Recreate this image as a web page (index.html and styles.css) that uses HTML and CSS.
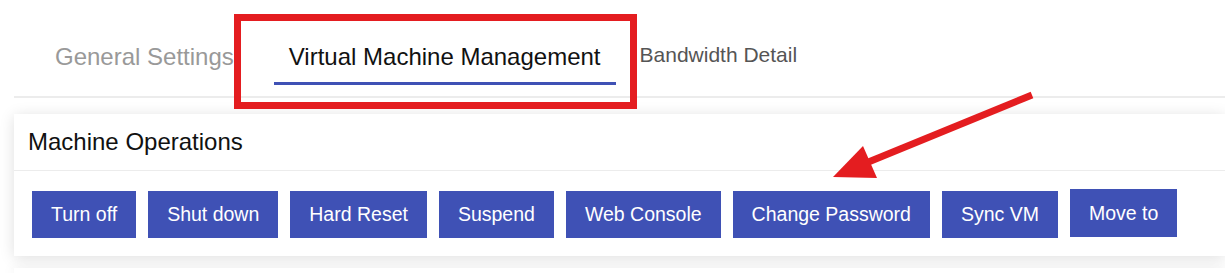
FILE: index.html
```html
<!DOCTYPE html>
<html lang="en">
<head>
<meta charset="UTF-8">
<title>Virtual Machine Management</title>
<link rel="stylesheet" href="styles.css">
</head>
<body>
<div class="tabs">
    <div class="tab muted">General Settings</div>
    <div class="tab active">Virtual Machine Management</div>
    <div class="tab small">Bandwidth Detail</div>
</div>

<div class="card">
    <div class="card-head">Machine Operations</div>
    <div class="card-body">
        <button class="btn">Turn off</button>
        <button class="btn">Shut down</button>
        <button class="btn">Hard Reset</button>
        <button class="btn">Suspend</button>
        <button class="btn">Web Console</button>
        <button class="btn">Change Password</button>
        <button class="btn">Sync VM</button>
        <button class="btn move">Move to</button>
    </div>
</div>
<div class="card next"></div>

<!-- annotation overlay -->
<div class="mark-box"></div>
<svg class="mark-arrow" width="1225" height="273" viewBox="0 0 1225 273">
    <line x1="1032" y1="95" x2="866" y2="163" stroke="#e41d20" stroke-width="7"/>
    <polygon points="833,177 863,146 877,178" fill="#e41d20"/>
</svg>
</body>
</html>
```

FILE: styles.css
```css
body {
  font-family: 'Liberation Sans', Arial, sans-serif;
  background-color: #fff;
  color: #111;
  margin: 0;
  width: 1225px;
  height: 273px;
  overflow: hidden;
  position: relative;
}

.tabs {
  display: flex;
  align-items: flex-end;
  gap: 25px;
  margin-left: 14px;
  padding: 40px 0 11px 26px;
  border-bottom: 2px solid #ececec;
}

.tab {
  font-size: 24px;
  line-height: 30px;
  padding: 0 15px 10px;
  border-bottom: 3px solid transparent;
}

.tab.muted {
  color: #999;
}

.tab.active {
  color: #111;
  border-bottom-color: #3f51b5;
}

.tab.small {
  font-size: 21px;
  color: #555;
  padding-left: 0;
  padding-bottom: 12px;
  margin-left: -1px;
}

.card {
  background-color: #fff;
  margin: 16px 0 0 14px;
  box-shadow: 0 2px 14px rgba(0, 0, 0, 0.13);
}

.card-head {
  font-size: 24px;
  line-height: 56px;
  padding: 0 14px;
  border-bottom: 1px solid #ececec;
}

.card-body {
  display: flex;
  align-items: flex-start;
  gap: 12px;
  padding: 20px 18px 18px;
}

.btn {
  font-family: 'Liberation Sans', Arial, sans-serif;
  font-size: 19.5px;
  height: 47px;
  padding: 0 19px;
  background-color: #3f51b5;
  color: #fff;
  border: none;
  border-radius: 0;
  cursor: pointer;
}

.btn.move {
  margin-top: -2px;
  height: 48px;
}

.card.next {
  margin-top: 12px;
  height: 5px;
}

.mark-box {
  position: absolute;
  left: 234px;
  top: 14px;
  width: 389px;
  height: 81px;
  border: 7px solid #e41d20;
}

.mark-arrow {
  position: absolute;
  left: 0;
  top: 0;
  pointer-events: none;
}
```
